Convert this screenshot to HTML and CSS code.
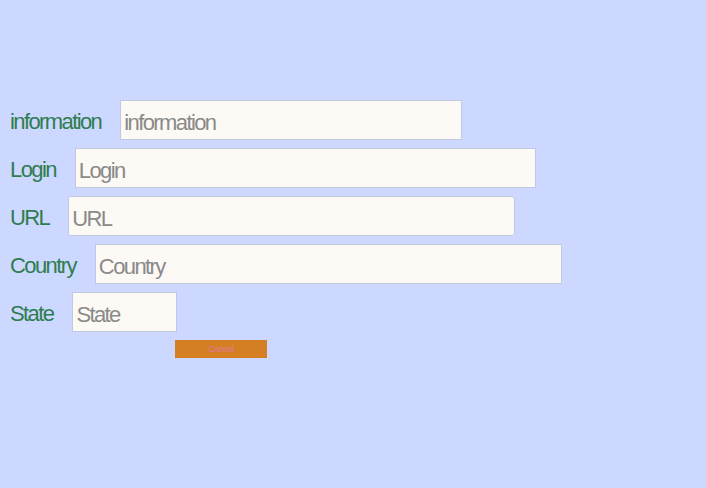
FILE: index.html
```html
<!DOCTYPE html>
<html>
<head>
<meta charset="utf-8">
<link rel="stylesheet" href="styles.css">
</head>
<body>
<form class="form">
  <div class="row"><label class="lbl">information</label><input class="inp w-info" placeholder="information"></div>
  <div class="row"><label class="lbl">Login</label><input class="inp w-login" placeholder="Login"></div>
  <div class="row"><label class="lbl">URL</label><input class="inp w-url rounded" placeholder="URL"></div>
  <div class="row"><label class="lbl">Country</label><input class="inp w-country" placeholder="Country"></div>
  <div class="row"><label class="lbl">State</label><input class="inp w-state" placeholder="State"></div>
  <div class="actions"><button type="button" class="cancel">Cancel</button></div>
</form>
</body>
</html>
```
FILE: styles.css
```css
html, body {
  margin: 0;
  padding: 0;
  background: #ccd8ff;
}
body {
  font-family: "Liberation Sans", Arial, sans-serif;
}
.form {
  padding: 100px 0 0 10px;
  display: flex;
  flex-direction: column;
  gap: 8px;
}
.row {
  display: flex;
  align-items: center;
  height: 40px;
}
.lbl {
  font-size: 22px;
  letter-spacing: -1.6px;
  color: #2f7d50;
  margin-right: 19px;
  padding-top: 4px;
}
.inp {
  box-sizing: border-box;
  height: 40px;
  border: 1px solid #c2c8e2;
  background: #fdf9f5;
  font-family: "Liberation Sans", Arial, sans-serif;
  font-size: 22px;
  letter-spacing: -1.6px;
  padding: 6px 4px 0 3px;
  color: #555;
  outline: none;
}
.inp::placeholder {
  color: #8a8a8a;
  letter-spacing: -1.6px;
}
.rounded { border-radius: 3px; }
.w-info { width: 342px; }
.w-login { width: 461px; }
.w-url { width: 447px; }
.w-country { width: 467px; }
.w-state { width: 105px; }
.actions {
  display: flex;
  padding-left: 165px;
}
.cancel {
  width: 92px;
  height: 18px;
  border: none;
  background: #d37f22;
  color: #e3799a;
  font-family: "Liberation Sans", Arial, sans-serif;
  font-size: 9px;
  letter-spacing: -0.5px;
  padding: 0;
}
```
